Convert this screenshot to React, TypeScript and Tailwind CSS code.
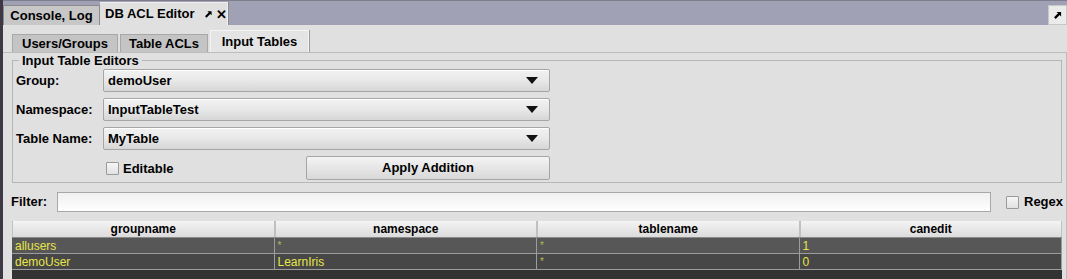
import React from 'react';

const font = { fontFamily: '"Liberation Sans", Arial, sans-serif' };

function DetachIcon({ className = '' }: { className?: string }) {
  return (
    <svg viewBox="0 0 10 10" className={className} fill="currentColor">
      <path d="M4 1 H9 V6 L7.4 4.4 L3 8.8 L1.2 7 L5.6 2.6 Z" />
    </svg>
  );
}

function Combo({ value }: { value: string }) {
  return (
    <div className="flex h-[23px] w-[447px] items-center justify-between rounded-[2px] border border-[#a6a6a6] bg-gradient-to-b from-[#f2f2f2] via-[#e8e8e8] to-[#d6d6d6] pl-[4px] pr-[11px] shadow-[inset_0_1px_0_#fff]">
      <span className="text-[13px] font-bold text-black">{value}</span>
      <svg viewBox="0 0 12 7" className="h-[7px] w-[12px]">
        <path d="M0 0 H12 L6 7 Z" fill="#111" />
      </svg>
    </div>
  );
}

function Check() {
  return <span className="inline-block h-[13px] w-[13px] shrink-0 rounded-[1px] border border-[#9a9a9a] bg-gradient-to-b from-[#f6f6f6] to-[#e2e2e2]" />;
}

const rows = [
  ['allusers', '*', '*', '1'],
  ['demoUser', 'LearnIris', '*', '0'],
];

export default function App() {
  return (
    <div className="flex h-[279px] w-[1067px] overflow-hidden bg-[#a1a1b5]" style={font}>
      <div className="w-[3px] shrink-0 bg-[#3d3844]" />
      <div className="flex flex-1 flex-col">
        {/* Top tab bar */}
        <div className="relative flex h-[25px] shrink-0 items-end border-t border-[#7d7d8c]">
          <div className="flex h-[20px] w-[97px] items-center justify-center border border-b-0 border-[#8a8a8a] bg-[#c7c7c7] text-[13px] font-bold text-black">
            Console, Log
          </div>
          <div className="flex h-[23px] w-[128px] items-center whitespace-nowrap border-r border-t border-[#f0f0f0] bg-[#e0e0e0] pl-[5px] text-[13px] font-bold text-black shadow-[1px_0_0_#8a8a8a]">
            <span>DB ACL Editor</span>
            <DetachIcon className="ml-[9px] h-[9px] w-[9px] text-black" />
            <span className="ml-[4px] text-[13px] leading-none">✕</span>
          </div>
          <div className="absolute right-0 top-[4px] flex h-[20px] w-[19px] items-center justify-center border border-[#c8c8c8] bg-[#ebebeb]">
            <DetachIcon className="h-[9px] w-[9px] text-black" />
          </div>
        </div>

        {/* Content */}
        <div className="flex min-h-0 flex-1 flex-col bg-[#e0e0e0] pt-[5px]">
          <div className="flex h-[22px] shrink-0 items-end pl-[9px]">
            <div className="flex h-[18px] w-[106px] items-center justify-center border border-b-0 border-[#a8a8a8] bg-[#c4c4c4] text-[13px] font-bold">
              Users/Groups
            </div>
            <div className="ml-[2px] flex h-[18px] w-[88px] items-center justify-center border border-b-0 border-[#a8a8a8] bg-[#c4c4c4] text-[13px] font-bold">
              Table ACLs
            </div>
            <div className="ml-[2px] flex h-[22px] w-[99px] items-center justify-center border border-b-0 border-[#f4f4f4] bg-[#e4e4e4] text-[13px] font-bold shadow-[1px_0_0_#9a9a9a]">
              Input Tables
            </div>
          </div>

          <div className="flex min-h-0 flex-1 flex-col border-r border-t border-[#bdbdbd] pl-[9px] pr-[2px]">
            <fieldset className="w-[1050px] shrink-0 border border-[#b6b6b6] pb-[2px] pl-[3px]">
              <legend className="ml-[3px] px-[3px] text-[13px] font-bold leading-[15px]">Input Table Editors</legend>
              <div className="mt-[1px] flex flex-col gap-[6px]">
                {[
                  ['Group:', 'demoUser'],
                  ['Namespace:', 'InputTableTest'],
                  ['Table Name:', 'MyTable'],
                ].map(([l, v]) => (
                  <div key={l} className="flex items-center">
                    <span className="w-[87px] whitespace-nowrap text-[13px] font-bold">{l}</span>
                    <Combo value={v} />
                  </div>
                ))}
                <div className="flex h-[24px] items-center">
                  <div className="ml-[90px] flex w-[200px] items-center gap-[4px] pt-[1px]">
                    <Check />
                    <span className="text-[13px] font-bold">Editable</span>
                  </div>
                  <button className="flex h-[24px] w-[244px] items-center justify-center rounded-[2px] border border-[#a6a6a6] bg-gradient-to-b from-[#f4f4f4] to-[#d8d8d8] text-[13px] font-bold">
                    Apply Addition
                  </button>
                </div>
              </div>
            </fieldset>

            <div className="mt-[9px] flex h-[20px] shrink-0 items-center">
              <span className="-ml-[1px] w-[46px] text-[13px] font-bold">Filter:</span>
              <div className="h-[20px] w-[934px] border border-[#a8a8a8] bg-gradient-to-b from-[#f0f0f0] to-white" />
              <div className="ml-[15px] flex items-center gap-[5px]">
                <Check />
                <span className="text-[13px] font-bold">Regex</span>
              </div>
            </div>

            <div className="mt-[9px] flex w-[1050px] flex-1 flex-col bg-[#333333]">
              <div className="grid h-[17px] grid-cols-4 border-b border-[#8a8a8a] bg-gradient-to-b from-[#f4f4f4] to-[#dcdcdc]">
                {['groupname', 'namespace', 'tablename', 'canedit'].map((h) => (
                  <div key={h} className="flex items-center justify-center border-l border-r border-[#c0c0c0] text-[12px] font-bold leading-none">
                    {h}
                  </div>
                ))}
              </div>
              {rows.map((r, i) => (
                <div key={i} className={`grid h-[16px] grid-cols-4 border-b border-[#9c9c9c] ${i === 0 ? 'bg-[#575757]' : 'bg-[#474747]'}`}>
                  {r.map((c, j) => (
                    <div key={j} className="flex items-center border-r border-[#9c9c9c] pl-[3px] text-[12px] leading-none text-[#e6e64a]">
                      {c === '*' ? <span className="text-[10px] text-[#b8b85a]">*</span> : c}
                    </div>
                  ))}
                </div>
              ))}
            </div>
          </div>
        </div>
      </div>
    </div>
  );
}
